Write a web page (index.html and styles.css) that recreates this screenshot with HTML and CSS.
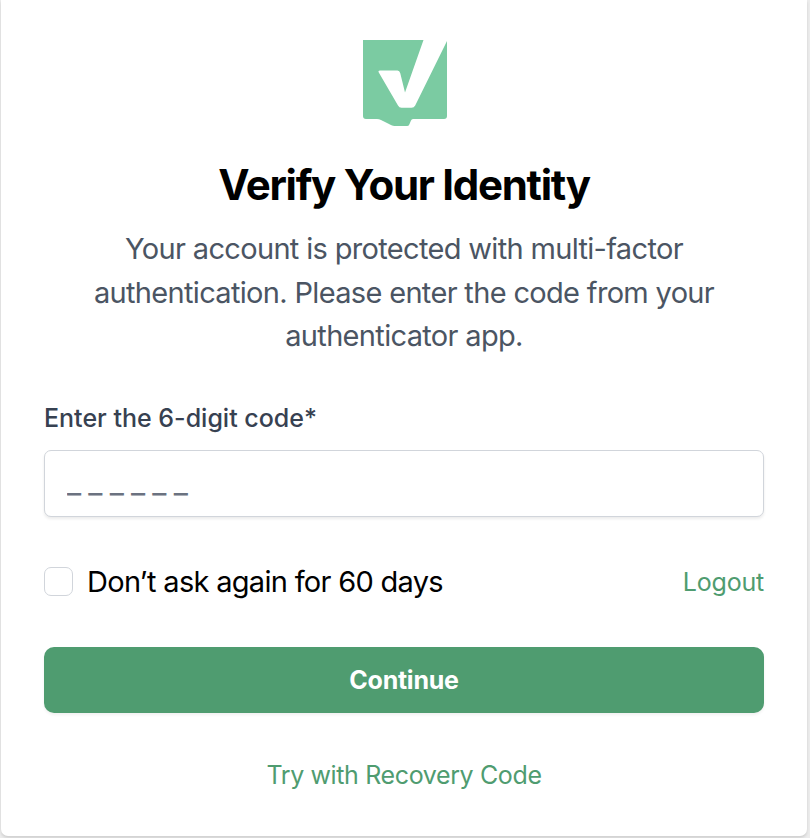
FILE: index.html
```html
<!DOCTYPE html>
<html lang="en">
<head>
    <meta charset="UTF-8">
    <meta name="viewport" content="width=device-width, initial-scale=1.0">
    <title>Verify Your Identity</title>
    <link rel="stylesheet" href="styles.css">
</head>
<body>
    <div class="card">
        <svg class="logo" width="84" height="86" viewBox="0 0 84 86" aria-hidden="true">
            <path fill="#7bcba2" d="M0 0H60.5L42 52.5L37.2 33Q36.5 30.5 34.5 30.5H17Q14.8 30.5 15.8 32.5L35 65.5Q36.2 67.7 38.5 67.7H48.5Q51 67.7 52.2 65.5L84 1V76Q84 79 81 79H50Q48.5 79 48 80.5L46.3 84.5Q45.7 86 44 86H31.5Q30 86 28.5 85.2L18 80Q16 79 14 79H3Q0 79 0 76Z"/>
        </svg>
        <h1>Verify Your Identity</h1>
        <p class="intro">Your account is protected with multi-factor<br>authentication. Please enter the code from your<br>authenticator app.</p>

        <form>
            <label class="code-label" for="code">Enter the 6-digit code*</label>
            <input type="text" id="code" class="code-input" placeholder="______" maxlength="6">

            <div class="options">
                <label class="remember">
                    <input type="checkbox" class="checkbox">
                    <span>Don’t ask again for 60 days</span>
                </label>
                <a href="#" class="link">Logout</a>
            </div>

            <button type="submit">Continue</button>
        </form>

        <a href="#" class="link recovery">Try with Recovery Code</a>
    </div>
</body>
</html>
```

FILE: styles.css
```css
* {
    box-sizing: border-box;
}
body {
    margin: 0;
    height: 838px;
    padding: 0 3px 2px 1px;
    overflow: hidden;
    background: #ececec;
    font-family: Inter, sans-serif;
    color: #000;
}
.card {
    display: flex;
    flex-direction: column;
    align-items: center;
    height: 836px;
    padding: 40px 43px 0;
    background: #fff;
    border-radius: 0 0 7px 7px;
    box-shadow: 0 2px 3px rgba(0, 0, 0, 0.12);
}
.logo {
    display: block;
    margin-left: 2px;
}
h1 {
    margin: 35px 0 0;
    font-size: 42px;
    line-height: 48px;
    font-weight: 700;
    letter-spacing: -1.3px;
    white-space: nowrap;
}
.intro {
    margin: 18px 0 0;
    font-size: 29px;
    line-height: 43.5px;
    letter-spacing: -0.67px;
    color: #4b5563;
    text-align: center;
    white-space: nowrap;
}
form {
    width: 100%;
}
.code-label {
    display: block;
    margin-top: 42px;
    font-size: 25px;
    line-height: 36px;
    font-weight: 500;
    color: #374151;
}
.code-input {
    display: block;
    width: 100%;
    height: 67px;
    margin-top: 14px;
    padding: 0 22px 3px;
    border: 1px solid #d1d5db;
    border-radius: 7px;
    box-shadow: 0 2px 3px rgba(0, 0, 0, 0.08);
    font-family: inherit;
    font-size: 31px;
    letter-spacing: 7.2px;
}
.code-input::placeholder {
    color: #6b7280;
}
.options {
    display: flex;
    justify-content: space-between;
    align-items: center;
    height: 44px;
    margin-top: 43px;
}
.remember {
    display: flex;
    align-items: center;
    gap: 14px;
    font-size: 29px;
    letter-spacing: -0.7px;
    white-space: nowrap;
}
.checkbox {
    appearance: none;
    width: 29px;
    height: 29px;
    margin: 0;
    border: 1px solid #d1d5db;
    border-radius: 7px;
    background: #fff;
}
.link {
    font-size: 25px;
    letter-spacing: -0.2px;
    color: #4f9c70;
    text-decoration: none;
}
button {
    display: block;
    width: 100%;
    height: 66px;
    margin-top: 43px;
    border: none;
    border-radius: 10px;
    background: #4f9c70;
    box-shadow: 0 2px 3px rgba(0, 0, 0, 0.06);
    font-family: inherit;
    font-size: 25px;
    font-weight: 700;
    letter-spacing: -0.25px;
    color: #fff;
    cursor: pointer;
}
.recovery {
    margin-top: 44px;
    line-height: 36px;
    letter-spacing: -0.37px;
}
```
